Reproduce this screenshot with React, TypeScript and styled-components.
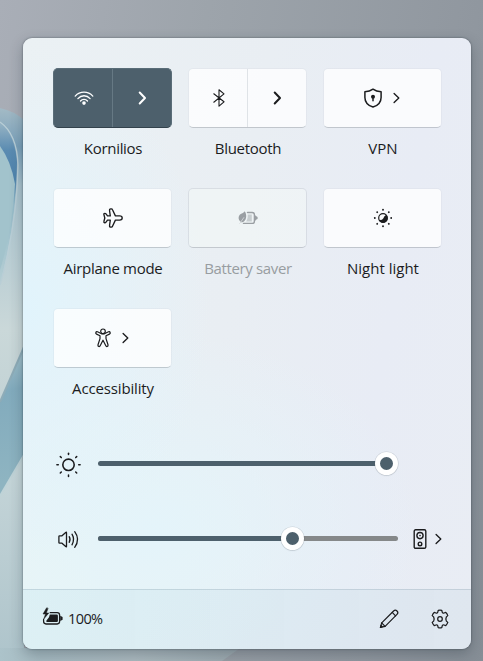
import React from "react";
import styled, { createGlobalStyle, css } from "styled-components";

const accent = "#4d606c";
const ink = "#1b1c1e";

const GlobalStyle = createGlobalStyle`
  *, *::before, *::after { box-sizing: border-box; }
  html, body { margin: 0; padding: 0; overflow: hidden; }
  body { font-family: "Open Sans", "Noto Sans", sans-serif; color: ${ink}; }
  button { font: inherit; color: inherit; border: 0; background: none; padding: 0; }
  svg { display: block; flex: none; overflow: visible; }
`;

const Desktop = styled.main`
  position: relative;
  width: 483px;
  height: 661px;
  padding: 38px 12px 12px 23px;
  overflow: hidden;
  background: linear-gradient(100deg, #a9aeb7 0%, #9da4ab 35%, #90979f 80%, #868e96 100%);
`;

const WallpaperArt = styled.svg`
  position: absolute;
  inset: 0;
`;

const Panel = styled.section`
  position: relative;
  width: 448px;
  height: 611px;
  display: flex;
  flex-direction: column;
  border-radius: 9px;
  overflow: hidden;
  background:
    radial-gradient(ellipse 190px 260px at 0 270px, #e1f4fc 0%, rgba(225, 244, 252, 0) 100%),
    radial-gradient(ellipse 270px 200px at 130px 490px, #e4f4fa 0%, rgba(228, 244, 250, 0) 100%),
    radial-gradient(ellipse 260px 200px at 0 560px, #eaf6f5 0%, rgba(234, 246, 245, 0) 100%),
    linear-gradient(100deg, #ebf1f4 0%, #e9eef3 45%, #e8ecf5 75%, #e9edf4 100%);
`;

const PanelShadow = styled.div`
  position: relative;
  width: 448px;
  border-radius: 9px;
  box-shadow: 0 0 2px rgba(30, 40, 50, 0.6), 0 5px 14px rgba(20, 35, 48, 0.28);
`;

const Body = styled.div`
  flex: 1;
  padding: 30px 26px 0 30px;
`;

const TileGrid = styled.div`
  display: grid;
  grid-template-columns: repeat(3, 119px);
  grid-auto-rows: 120px;
  column-gap: 16px;
  height: 358px;
`;

const Tile = styled.div`
  display: flex;
  flex-direction: column;
  align-items: center;
`;

type Tone = "on" | "off" | "disabled";

const tones = {
  on: css`
    background: ${accent};
    color: #fff;
    border: 1px solid #5a6d78;
    border-bottom-color: #33424c;
  `,
  off: css`
    background: rgba(255, 255, 255, 0.78);
    border: 1px solid rgba(120, 130, 140, 0.05);
    border-bottom-color: rgba(50, 60, 70, 0.22);
    background-clip: padding-box;
  `,
  disabled: css`
    background: rgba(246, 250, 249, 0.45);
    border: 1px solid rgba(70, 80, 90, 0.1);
    border-bottom-color: rgba(60, 70, 80, 0.22);
    background-clip: padding-box;
    color: #9a9fa3;
  `,
};

const TileSurface = styled.div<{ $tone: Tone }>`
  display: flex;
  width: 119px;
  height: 60px;
  border-radius: 5px;
  ${(p) => tones[p.$tone]}
`;

const TileButton = styled.button<{ $gap?: number; $divided?: boolean; $on?: boolean; $shift?: number }>`
  flex: ${(p) => (p.$divided ? "0 0 59px" : "1")};
  display: flex;
  align-items: center;
  justify-content: center;
  gap: ${(p) => p.$gap ?? 0}px;
  padding-left: ${(p) => Math.max(0, p.$shift ?? 0)}px;
  padding-right: ${(p) => Math.max(0, -(p.$shift ?? 0))}px;
  border-right: ${(p) => (p.$divided ? `1px solid ${p.$on ? "#667984" : "#dfe3e7"}` : "0")};
`;

const Label = styled.span<{ $dim?: boolean; $spacing?: number }>`
  margin-top: 10px;
  padding-left: 1px;
  font-size: 15px;
  line-height: 20px;
  white-space: nowrap;
  letter-spacing: ${(p) => p.$spacing ?? 0}px;
  color: ${(p) => (p.$dim ? "#989da1" : ink)};
`;

const SliderRow = styled.div`
  display: flex;
  align-items: center;
  height: 75px;
`;

const SliderIcon = styled.div`
  width: 45px;
  padding-left: 2px;
`;

const Track = styled.div`
  position: relative;
  width: 300px;
  height: 5px;
  border-radius: 3px;
  background: #858889;
`;

const Fill = styled.div<{ $to: number }>`
  width: ${(p) => p.$to}px;
  height: 5px;
  border-radius: 3px;
  background: ${accent};
`;

const FullTrack = styled(Track)`
  background: transparent;
`;

const Thumb = styled.div<{ $at: number }>`
  position: absolute;
  top: -9px;
  left: ${(p) => p.$at - 11.5}px;
  width: 23px;
  height: 23px;
  border-radius: 50%;
  border: 5px solid #fff;
  background: ${accent};
  box-shadow: 0 0 0 0.6px rgba(90, 100, 110, 0.22), 0 1px 1px rgba(60, 70, 80, 0.12);
`;

const OutputButton = styled.button`
  display: flex;
  align-items: center;
  gap: 8px;
  margin-left: 15px;
  padding-top: 1px;
`;

const Footer = styled.footer`
  display: flex;
  align-items: center;
  height: 60px;
  padding: 0 21px 2px 19px;
  border-top: 1px solid rgba(110, 135, 150, 0.23);
  background: linear-gradient(90deg, rgba(209, 235, 242, 0.5), rgba(211, 223, 234, 0.48));
`;

const BatteryStatus = styled.div`
  display: flex;
  align-items: center;
  gap: 5px;
  flex: 1;
  font-size: 14.5px;
  line-height: 20px;
  letter-spacing: -0.6px;
`;

const FooterActions = styled.div`
  display: flex;
  align-items: center;
  gap: 31px;
`;

const line = {
  fill: "none",
  stroke: "currentColor",
  strokeLinecap: "round" as const,
  strokeLinejoin: "round" as const,
};

const Wallpaper = () => (
  <WallpaperArt width="483" height="661" viewBox="0 0 483 661">
    <defs>
      <linearGradient id="petal" x1="0" y1="108" x2="0" y2="661" gradientUnits="userSpaceOnUse">
        <stop offset="0" stopColor="#a3bac5" />
        <stop offset=".07" stopColor="#79a0ba" />
        <stop offset=".14" stopColor="#a9c3ce" />
        <stop offset=".4" stopColor="#cad8d9" />
        <stop offset="1" stopColor="#aac1c9" />
      </linearGradient>
      <linearGradient id="inner" x1="0" y1="120" x2="0" y2="290" gradientUnits="userSpaceOnUse">
        <stop offset="0" stopColor="#9db8c6" />
        <stop offset=".18" stopColor="#5a8bb1" />
        <stop offset=".35" stopColor="#4f83ad" />
        <stop offset=".5" stopColor="#94bac8" />
        <stop offset="1" stopColor="#b8d0d5" />
      </linearGradient>
      <linearGradient id="band" x1="0" y1="360" x2="14" y2="480" gradientUnits="userSpaceOnUse">
        <stop offset="0" stopColor="#9bbcc8" />
        <stop offset=".25" stopColor="#82abbd" />
        <stop offset="1" stopColor="#8eb4c1" />
      </linearGradient>
      <linearGradient id="fold" x1="0" y1="455" x2="0" y2="661" gradientUnits="userSpaceOnUse">
        <stop offset="0" stopColor="#c6d6d9" />
        <stop offset="1" stopColor="#aec4cb" />
      </linearGradient>
      <linearGradient id="floor" x1="0" y1="0" x2="300" y2="0" gradientUnits="userSpaceOnUse">
        <stop offset="0" stopColor="#acc3ca" />
        <stop offset=".14" stopColor="#a5b9c0" />
        <stop offset=".45" stopColor="#aab8be" />
        <stop offset=".8" stopColor="#9ba8ae" />
        <stop offset="1" stopColor="#868c94" />
      </linearGradient>
    </defs>
    <path d="M0 108Q14 111 24 120V661H0Z" fill="url(#petal)" />
    <path d="M0 122Q15 136 17 162Q17 218 0 285Z" fill="url(#inner)" />
    <path d="M0 146Q11 161 15 184Q12 232 0 270Z" fill="#a2c3cc" />
    <path d="M0 122Q17 134 18 165Q17 225 0 285" fill="none" stroke="#b9ced6" strokeWidth="1.3" />
    <path d="M24 347L0 402V496L24 455Z" fill="url(#band)" />
    <path d="M24 455L0 496V661H24Z" fill="url(#fold)" />
    <path d="M24 347L0 402" stroke="#8eacb8" strokeWidth="2" />
    <path d="M24 455L0 496" stroke="#bfd3d7" strokeWidth="2" />
    <path d="M0 648H240L222 661H0Z" fill="url(#floor)" />
  </WallpaperArt>
);

const Chevron = ({ bold }: { bold?: boolean }) =>
  bold ? (
    <svg width="9" height="14" viewBox="0 0 9 14" {...line} strokeWidth="2">
      <path d="M1.7 1.5L7 7L1.7 12.5" />
    </svg>
  ) : (
    <svg width="7" height="12" viewBox="0 0 7 12" {...line} strokeWidth="1.35">
      <path d="M1.1 1.4L5.8 6L1.1 10.6" />
    </svg>
  );

const WifiIcon = () => (
  <svg width="20" height="16" viewBox="0 0 20 16" {...line} strokeWidth="1.3">
    <path d="M1.2 6.1C6 .8 14 .8 18.8 6.1M3.9 8.6C7.2 4.8 12.8 4.8 16.1 8.6M6.5 11C8.4 8.7 11.6 8.7 13.5 11" />
    <circle cx="10" cy="13.1" r="1.8" fill="currentColor" stroke="none" />
  </svg>
);

const BluetoothIcon = () => (
  <svg width="12" height="18" viewBox="0 0 12 18" {...line} strokeWidth="1.1">
    <path d="M.8 4.8L11 12.8L6 17.2V.8L11 4.9L.8 13.2" />
  </svg>
);

const ShieldIcon = () => (
  <svg width="18" height="20" viewBox="0 0 18 20" {...line} strokeWidth="1.5">
    <path d="M9 1.2C11.3 2.9 14 3.7 17.1 3.8V9.4C17.1 14 14.3 17.3 9 19C3.7 17.3 .9 14 .9 9.4V3.8C4 3.7 6.7 2.9 9 1.2Z" />
    <circle cx="9" cy="8.7" r="2" fill="currentColor" stroke="none" />
    <path d="M9 9V12.7" />
  </svg>
);

const AirplaneIcon = () => (
  <svg width="20" height="20" viewBox="0 0 20 20" {...line} strokeWidth="1.35">
    <path d="M7.3 7.9L6.6 3C6.4 1.5 6.8.9 7.7.9H8.4C8.9.9 9.3 1.2 9.5 1.7L12.4 7.9H16.6C18.2 7.9 19.2 8.7 19.2 10S18.2 12.1 16.6 12.1H12.4L9.5 18.3C9.3 18.8 8.9 19.1 8.4 19.1H7.7C6.8 19.1 6.4 18.5 6.6 17L7.3 12.1H4.5L3 14.1C2.7 14.5 2.3 14.7 1.8 14.7C1 14.7.7 14.2.9 13.5L1.8 10L.9 6.5C.7 5.8 1 5.3 1.8 5.3C2.3 5.3 2.7 5.5 3 5.9L4.5 7.9Z" />
  </svg>
);

const BatterySaverIcon = () => (
  <svg width="20" height="14" viewBox="0 0 20 14" {...line} strokeWidth="1.4">
    <path d="M.7 13.2L2.8 10.9C-.1 8.9-.1 5.2 2.7 3.1C4.2 2 5.6 2 6.8.3C8.8 3.1 8.8 8.1 6.2 10.3C4.7 11.5 3.4 11.2 2.7 11.4Z" fill="currentColor" stroke="none" />
    <path d="M2.6 11.2L5.8 6.6" stroke="#f0f4f6" strokeWidth=".6" />
    <path d="M9.5 1.5H14.2Q16.4 1.5 16.4 3.7V10.2Q16.4 12.4 14.2 12.4H5.5" />
    <path d="M9.7 3.6H13.8V10.4H8.2C9.6 8.2 9.9 6 9.7 3.6Z" fill="currentColor" fillOpacity=".45" stroke="none" />
    <path d="M17 4.6H17.7Q18 5.4 19.6 5.9V8.1Q18 8.6 17.7 9.4H17Z" fill="currentColor" stroke="none" />
  </svg>
);

const NightLightIcon = () => (
  <svg width="20" height="20" viewBox="0 0 20 20">
    <circle cx="10" cy="10" r="4.3" fill="#fafbfc" stroke={ink} strokeWidth="1.2" />
    <path d="M13.2 6.8A4.6 4.6 0 1 1 5.9 12Q9.2 12.4 10.4 10.2Q10.7 8.5 13.2 6.8Z" fill={ink} />
    {[0, 45, 90, 135, 180, 225, 270, 315].map((a) => (
      <circle key={a} cx="10" cy="1.8" r=".95" fill={ink} transform={`rotate(${a} 10 10)`} />
    ))}
  </svg>
);

const AccessibilityIcon = () => (
  <svg width="16" height="20" viewBox="0 0 16 20" {...line} strokeWidth="1.2">
    <circle cx="8" cy="3.3" r="2.3" />
    <path d="M5.6 5.2L2.5 3.8C.8 3.2.1 5.4 1.6 6.1L5 7.7V10.6L3 16.8C2.5 18.5 4.6 19.2 5.3 17.6L8 12.2L10.7 17.6C11.4 19.2 13.5 18.5 13 16.8L11 10.6V7.7L14.4 6.1C15.9 5.4 15.2 3.2 13.5 3.8L10.4 5.2C9 6.1 7 6.1 5.6 5.2Z" />
  </svg>
);

const SunIcon = () => (
  <svg width="27" height="26" viewBox="0 0 27 26" {...line} strokeWidth="1.6">
    <circle cx="13.5" cy="13.8" r="5.7" />
    <g strokeWidth="1.5">
      {[0, 45, 90, 135, 180, 225, 270, 315].map((a) => (
        <path key={a} d="M13.5 2.2V3.6" transform={`rotate(${a} 13.5 13.8)`} />
      ))}
    </g>
  </svg>
);

const VolumeIcon = () => (
  <svg width="27" height="20" viewBox="0 0 27 20" {...line} strokeWidth="1.3">
    <path d="M3.9 7.5Q3.9 6.9 4.6 6.9H6.7L10.7 3.4Q11.5 2.8 11.5 3.8V17.2Q11.5 18.2 10.7 17.6L6.7 14.1H4.6Q3.9 14.1 3.9 13.5Z" />
    <path d="M14.2 7.7Q15.9 10.5 14.2 13.3M17 5.2Q20.1 10.5 17 15.8M19.7 2.7Q25.5 10.5 19.7 18.3" />
  </svg>
);

const SpeakerDeviceIcon = () => (
  <svg width="14" height="20" viewBox="0 0 14 20" {...line} strokeWidth="1.4">
    <rect x="1.2" y=".8" width="11.6" height="18.5" rx="1.4" />
    <circle cx="7" cy="6.6" r="3.1" />
    <circle cx="7" cy="6.6" r=".8" fill="currentColor" stroke="none" />
    <circle cx="7" cy="14.9" r="1.8" />
  </svg>
);

const ChargingIcon = () => (
  <svg width="21" height="21" viewBox="0 0 21 21" {...line} strokeWidth="1.3">
    <path d="M8.2 4.7H15.2Q17.6 4.7 17.6 7.1V13.6Q17.6 16 15.2 16H4Q1.6 16 1.6 13.6V11.5" />
    <path d="M7.8 6.6H14.8Q15.9 6.6 15.9 7.7V13Q15.9 14.1 14.8 14.1H4.5L4.3 12.8L7 9.2Z" fill="currentColor" stroke="none" />
    <path d="M18.2 7.8L20.6 9V11.7L18.2 12.9Z" fill="currentColor" stroke="none" />
    <path d="M4.5 0L1 6H3.5L1.8 11L6.8 5H4.3L6 .6Z" fill="currentColor" stroke="currentColor" strokeWidth=".5" />
  </svg>
);

const PencilIcon = () => (
  <svg width="20" height="20" viewBox="0 0 20 20" {...line} strokeWidth="1.2">
    <path d="M1.4 18.3L2.7 13.9L14.6 2C15.6 1 17 1 18 2S19 4.4 18 5.4L6.1 17.3Z" />
    <path d="M13.2 3.4L16.6 6.8M2.7 13.9L6.1 17.3" />
    <path d="M1.4 18.4L2 16.4L3.4 17.8Z" fill="currentColor" />
  </svg>
);

const GearIcon = () => (
  <svg width="20" height="20" viewBox="0 0 20 20" {...line} strokeWidth="1.25">
    <circle cx="10" cy="10" r="2.3" />
    <path d="M8.2 1.3Q10 .9 11.8 1.3L12.2 3.1Q12.6 4.5 14 4L15.8 3.4Q17.2 4.8 17.8 6.6L16.4 7.9Q15.3 10 16.4 12.1L17.8 13.4Q17.2 15.2 15.8 16.6L14 16Q12.6 15.5 12.2 16.9L11.8 18.7Q10 19.1 8.2 18.7L7.8 16.9Q7.4 15.5 6 16L4.2 16.6Q2.8 15.2 2.2 13.4L3.6 12.1Q4.7 10 3.6 7.9L2.2 6.6Q2.8 4.8 4.2 3.4L6 4Q7.4 4.5 7.8 3.1Z" />
  </svg>
);

interface SplitTileProps {
  label: string;
  icon: React.ReactNode;
  on?: boolean;
  spacing?: number;
  shift?: number;
}

const SplitTile = ({ label, icon, on, spacing, shift }: SplitTileProps) => (
  <Tile>
    <TileSurface $tone={on ? "on" : "off"}>
      <TileButton $divided $on={on} $shift={shift}>{icon}</TileButton>
      <TileButton $shift={1}><Chevron bold /></TileButton>
    </TileSurface>
    <Label $spacing={spacing}>{label}</Label>
  </Tile>
);

interface SimpleTileProps {
  label: string;
  icon: React.ReactNode;
  more?: boolean;
  gap?: number;
  shift?: number;
  disabled?: boolean;
  spacing?: number;
}

const SimpleTile = ({ label, icon, more, gap, shift, disabled, spacing }: SimpleTileProps) => (
  <Tile>
    <TileSurface $tone={disabled ? "disabled" : "off"}>
      <TileButton $gap={gap} $shift={shift} disabled={disabled}>
        {icon}
        {more && <Chevron />}
      </TileButton>
    </TileSurface>
    <Label $dim={disabled} $spacing={spacing}>{label}</Label>
  </Tile>
);

export default function App() {
  return (
    <>
      <GlobalStyle />
      <Desktop>
        <Wallpaper />
        <PanelShadow>
          <Panel>
            <Body>
              <TileGrid>
                <SplitTile label="Kornilios" icon={<WifiIcon />} on shift={2} spacing={-0.3} />
                <SplitTile label="Bluetooth" icon={<BluetoothIcon />} shift={2} spacing={-0.3} />
                <SimpleTile label="VPN" icon={<ShieldIcon />} more gap={11} shift={-2} />
                <SimpleTile label="Airplane mode" icon={<AirplaneIcon />} spacing={-0.3} />
                <SimpleTile label="Battery saver" icon={<BatterySaverIcon />} disabled spacing={-0.37} />
                <SimpleTile label="Night light" icon={<NightLightIcon />} shift={1} />
                <SimpleTile label="Accessibility" icon={<AccessibilityIcon />} more gap={11} shift={-1} spacing={-0.15} />
              </TileGrid>
              <SliderRow>
                <SliderIcon><SunIcon /></SliderIcon>
                <FullTrack>
                  <Fill $to={280} />
                  <Thumb $at={288.5} />
                </FullTrack>
              </SliderRow>
              <SliderRow>
                <SliderIcon><VolumeIcon /></SliderIcon>
                <Track>
                  <Fill $to={186} />
                  <Thumb $at={194.5} />
                </Track>
                <OutputButton>
                  <SpeakerDeviceIcon />
                  <Chevron />
                </OutputButton>
              </SliderRow>
            </Body>
            <Footer>
              <BatteryStatus>
                <ChargingIcon />
                100%
              </BatteryStatus>
              <FooterActions>
                <PencilIcon />
                <GearIcon />
              </FooterActions>
            </Footer>
          </Panel>
        </PanelShadow>
      </Desktop>
    </>
  );
}
